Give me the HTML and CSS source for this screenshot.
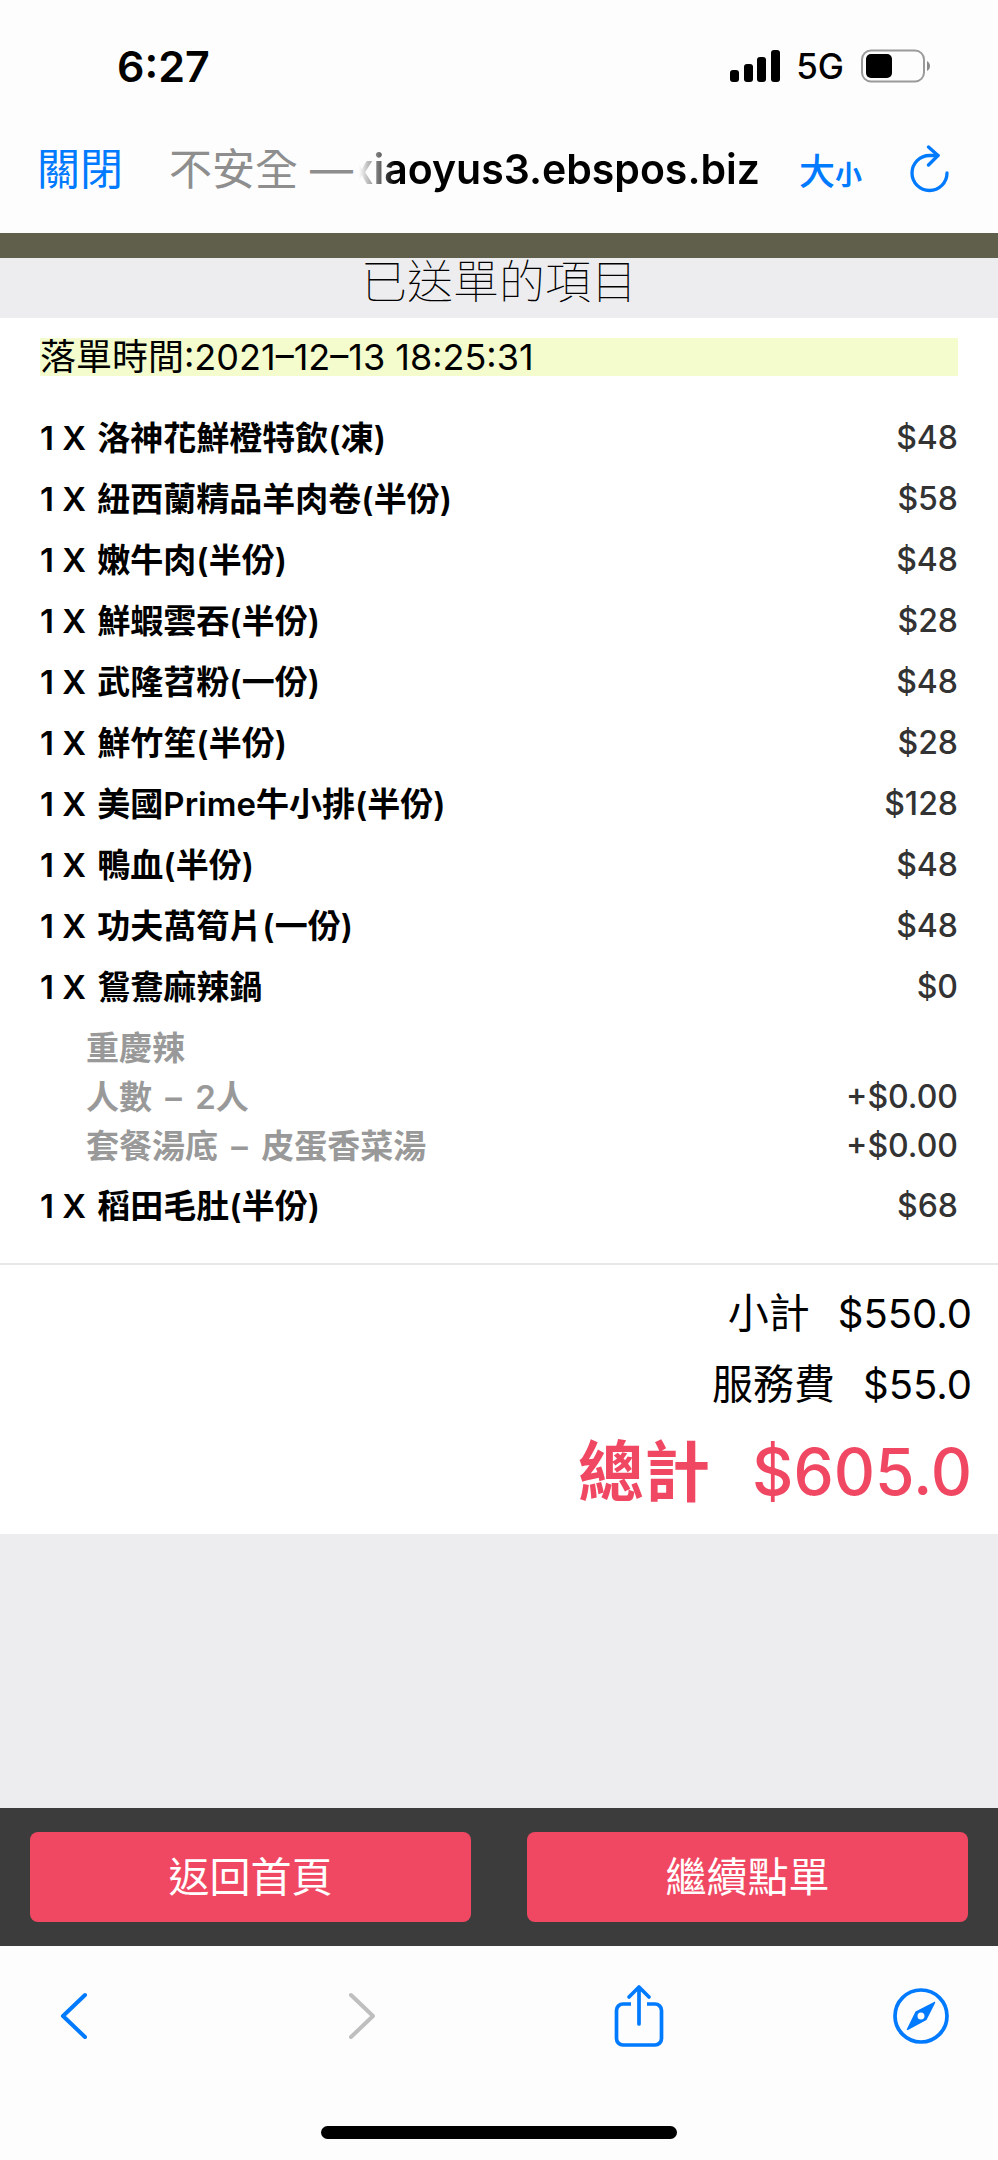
FILE: index.html
```html
<!DOCTYPE html>
<html lang="zh-Hant">
<head>
    <meta charset="UTF-8">
    <meta name="viewport" content="width=device-width, initial-scale=1.0">
    <title>已送單的項目</title>
    <link rel="stylesheet" href="styles.css">
</head>
<body>
    <!-- 狀態列 -->
    <div class="status-bar">
        <div class="clock">6:27</div>
        <div class="status-icons">
            <svg class="signal" width="50" height="32" viewBox="0 0 50 32">
                <rect x="0" y="20" width="9" height="12" rx="3"/>
                <rect x="14" y="14" width="9" height="18" rx="3"/>
                <rect x="27" y="7" width="9" height="25" rx="3"/>
                <rect x="41" y="0" width="9" height="32" rx="3"/>
            </svg>
            <span class="network">5G</span>
            <svg class="battery" width="70" height="34" viewBox="0 0 70 34">
                <rect x="1" y="1.500" width="62" height="31" rx="9" fill="none" stroke="#9a9a9a" stroke-width="2"/>
                <rect x="5" y="5" width="26" height="24" rx="5"/>
                <path d="M66 12c4 2 4 8 0 10z" fill="#8a8a8a"/>
            </svg>
        </div>
    </div>

    <!-- 網址列 -->
    <header class="address-bar">
        <button class="close-btn" type="button">關閉</button>
        <div class="address">
            <span class="insecure">不安全 —</span>
            <span class="host">xiaoyus3.ebspos.biz</span>
        </div>
        <button class="size-btn" type="button">大<small>小</small></button>
        <button class="reload-btn" type="button" aria-label="重新載入">
            <svg width="40" height="48" viewBox="0 0 40 48" fill="none" stroke="#007aff" stroke-width="3.300" stroke-linecap="round" stroke-linejoin="round">
                <path d="M37 28A17.500 17.500 0 1 1 19.500 10.500H28"/>
                <path d="M18.500 2l9.500 8.500L18.500 20"/>
            </svg>
        </button>
    </header>

    <!-- 訂單 -->
    <main class="content">
        <h1 class="page-title">已送單的項目</h1>
        <section class="order">
            <div class="order-time">落單時間:2021–12–13 18:25:31</div>
            <table class="items">
                <tr><td><span class="qty">1 X</span> 洛神花鮮橙特飲(凍)</td><td class="price">$48</td></tr>
                <tr><td><span class="qty">1 X</span> 紐西蘭精品羊肉卷(半份)</td><td class="price">$58</td></tr>
                <tr><td><span class="qty">1 X</span> 嫩牛肉(半份)</td><td class="price">$48</td></tr>
                <tr><td><span class="qty">1 X</span> 鮮蝦雲吞(半份)</td><td class="price">$28</td></tr>
                <tr><td><span class="qty">1 X</span> 武隆苕粉(一份)</td><td class="price">$48</td></tr>
                <tr><td><span class="qty">1 X</span> 鮮竹笙(半份)</td><td class="price">$28</td></tr>
                <tr><td><span class="qty">1 X</span> 美國Prime牛小排(半份)</td><td class="price">$128</td></tr>
                <tr><td><span class="qty">1 X</span> 鴨血(半份)</td><td class="price">$48</td></tr>
                <tr><td><span class="qty">1 X</span> 功夫萵筍片(一份)</td><td class="price">$48</td></tr>
                <tr><td><span class="qty">1 X</span> 鴛鴦麻辣鍋</td><td class="price">$0</td></tr>
                <tr class="option"><td>重慶辣</td><td class="price"></td></tr>
                <tr class="option"><td>人數 <span class="dash">–</span> 2人</td><td class="price">+$0.00</td></tr>
                <tr class="option"><td>套餐湯底 <span class="dash">–</span> 皮蛋香菜湯</td><td class="price">+$0.00</td></tr>
                <tr><td><span class="qty">1 X</span> 稻田毛肚(半份)</td><td class="price">$68</td></tr>
            </table>
        </section>
        <section class="totals">
            <div class="total-row"><span>小計</span><span class="amount">$550.0</span></div>
            <div class="total-row"><span>服務費</span><span class="amount">$55.0</span></div>
            <div class="total-row grand"><span>總計</span><span class="amount">$605.0</span></div>
        </section>
    </main>

    <!-- 底部按鈕 -->
    <div class="actions">
        <button class="action-btn" type="button">返回首頁</button>
        <button class="action-btn" type="button">繼續點單</button>
    </div>

    <!-- 瀏覽器工具列 -->
    <footer class="toolbar">
        <nav class="toolbar-icons">
            <button type="button" aria-label="上一頁">
                <svg width="28" height="48" viewBox="0 0 28 48" fill="none" stroke="#007aff" stroke-width="4" stroke-linecap="round" stroke-linejoin="round">
                    <path d="M25 3L3 24l22 21"/>
                </svg>
            </button>
            <button class="forward-btn" type="button" aria-label="下一頁" disabled>
                <svg width="28" height="48" viewBox="0 0 28 48" fill="none" stroke="#bfbfbf" stroke-width="4" stroke-linecap="round" stroke-linejoin="round">
                    <path d="M3 3l22 21L3 45"/>
                </svg>
            </button>
            <button type="button" aria-label="分享">
                <svg width="50" height="64" viewBox="0 0 50 64" fill="none" stroke="#007aff" stroke-width="3.700" stroke-linecap="round" stroke-linejoin="round">
                    <path stroke-linecap="butt" d="M17 20H9a6.500 6.500 0 0 0-6.500 6.500v28A6.500 6.500 0 0 0 9 61h32a6.500 6.500 0 0 0 6.500-6.500v-28A6.500 6.500 0 0 0 41 20h-8"/>
                    <path d="M25 40V3M15 13L25 3l10 10"/>
                </svg>
            </button>
            <button type="button" aria-label="在瀏覽器開啟">
                <svg width="56" height="56" viewBox="0 0 56 56">
                    <circle cx="28" cy="28" r="26" fill="none" stroke="#007aff" stroke-width="3.700"/>
                    <path fill="#007aff" fill-rule="evenodd" d="M41 14c1-.5 1.600.2 1 1.200L33.500 32 15 42c-1 .5-1.600-.2-1-1.200L22.500 23.500zM28 24.500a3.500 3.500 0 1 0 0 7 3.500 3.500 0 0 0 0-7z"/>
                </svg>
            </button>
        </nav>
        <div class="home-indicator"></div>
    </footer>
</body>
</html>
```
FILE: styles.css
```css
/* 全局樣式 */
* {
    margin: 0;
    padding: 0;
    box-sizing: border-box;
}

body {
    display: flex;
    flex-direction: column;
    min-height: 100vh;
    background: #ededef;
    color: #000;
    font-family: Inter, "Noto Sans CJK TC", sans-serif;
}

button {
    border: 0;
    background: none;
    color: #007aff;
    font-family: inherit;
    cursor: pointer;
}

svg {
    display: block;
}

/* 狀態列 */
.status-bar {
    display: flex;
    justify-content: space-between;
    align-items: center;
    height: 108px;
    padding: 24px 67px 0 117px;
    background: #fdfdfd;
}

.clock {
    font-size: 43px;
    font-weight: 600;
}

.status-icons {
    display: flex;
    align-items: center;
}

.network {
    margin: 0 17px 0 16px;
    font-size: 35px;
    font-weight: 500;
}

/* 網址列 */
.address-bar {
    display: flex;
    align-items: center;
    height: 125px;
    padding: 0 48px 4px 37px;
    background: #fdfdfd;
}

.close-btn {
    padding-bottom: 6px;
    font-size: 43px;
}

.address {
    flex: 1;
    display: flex;
    align-items: center;
    margin-left: 46px;
    white-space: nowrap;
    overflow: hidden;
}

.insecure {
    padding-bottom: 6px;
    color: #8e8e8e;
    font-size: 43px;
}

.host {
    flex: 1;
    display: flex;
    justify-content: flex-end;
    margin-left: 6px;
    overflow: hidden;
    font-size: 41px;
    font-weight: 600;
    -webkit-mask-image: linear-gradient(to right, transparent, #000 36px);
    mask-image: linear-gradient(to right, transparent, #000 36px);
}

.size-btn {
    margin-left: 39px;
    font-size: 36px;
    font-weight: 500;
}

.size-btn small {
    font-size: 27px;
    font-weight: 700;
}

.reload-btn {
    margin-left: 48px;
}

/* 訂單 */
.content {
    flex: 1;
    border-top: 25px solid #605f4c;
}

.page-title {
    height: 60px;
    font-size: 46px;
    font-weight: 100;
    line-height: 46px;
    text-align: center;
}

.order {
    padding: 20px 40px 28px;
    background: #fff;
}

.order-time {
    margin-bottom: 31px;
    background: #f4fccd;
    font-size: 36px;
    line-height: 38px;
}

.items {
    width: 100%;
    border-collapse: collapse;
    font-size: 33px;
    font-weight: 600;
}

.items td {
    height: 61px;
    line-height: 48px;
}

.qty {
    margin-right: 3px;
}

.dash {
    margin: 0 5px;
}

.items .price {
    color: #333;
    font-size: 32px;
    font-weight: 500;
    text-align: right;
}

.items .option td {
    height: 49px;
}

.items .option td:first-child {
    padding-left: 46px;
    color: #999;
}

.items tr:not(.option) + .option td {
    padding-top: 6px;
    height: 55px;
}

.items .option + tr:not(.option) td {
    padding-top: 6px;
    height: 65px;
}

/* 合計 */
.totals {
    padding: 13px 26px 14px;
    border-top: 2px solid #e8e8e8;
    background: #fff;
}

.total-row {
    display: flex;
    justify-content: flex-end;
    align-items: center;
    gap: 28px;
    font-size: 41px;
    line-height: 71px;
}

.total-row .amount {
    font-size: 40px;
}

.total-row.grand {
    gap: 42px;
    margin-top: 4px;
    color: #f04862;
    font-size: 66px;
    font-weight: 700;
    line-height: 96px;
}

.total-row.grand .amount {
    font-size: 64px;
    font-weight: 500;
}

/* 底部按鈕 */
.actions {
    display: flex;
    gap: 56px;
    padding: 24px 30px;
    background: #3c3c3c;
}

.action-btn {
    flex: 1;
    height: 90px;
    padding-bottom: 6px;
    border-radius: 8px;
    background: #f04862;
    color: #fff;
    font-size: 41px;
}

/* 瀏覽器工具列 */
.toolbar {
    background: #fdfdfd;
}

.toolbar-icons {
    display: flex;
    justify-content: space-between;
    align-items: center;
    height: 140px;
    padding: 0 49px 0 46px;
}

.toolbar-icons button {
    display: flex;
    justify-content: center;
    width: 56px;
}

.toolbar-icons .forward-btn {
    justify-content: flex-end;
    padding-right: 8px;
}

.home-indicator {
    width: 356px;
    height: 13px;
    margin: 40px auto 21px;
    border-radius: 7px;
    background: #000;
}
```
